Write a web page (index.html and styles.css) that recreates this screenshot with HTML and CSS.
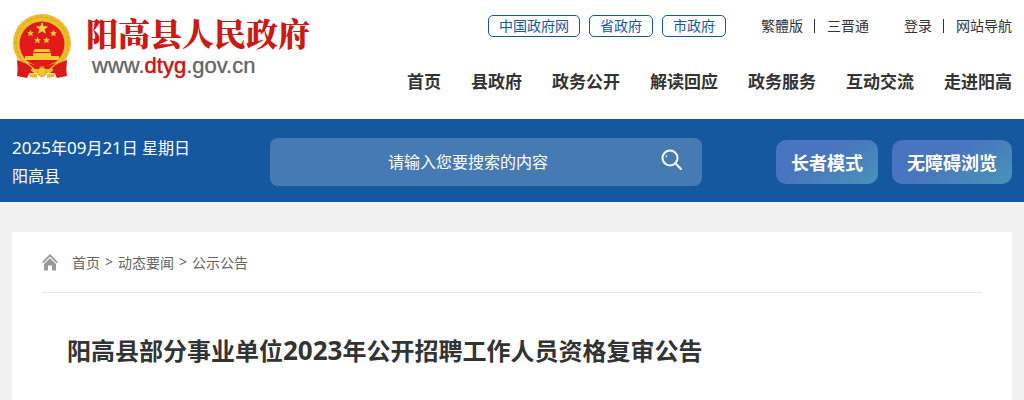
FILE: index.html
```html
<!DOCTYPE html>
<html lang="zh-CN">
<head>
    <meta charset="UTF-8">
    <meta name="viewport" content="width=device-width, initial-scale=1.0">
    <title>阳高县部分事业单位2023年公开招聘工作人员资格复审公告</title>
    <link rel="stylesheet" href="styles.css">
</head>
<body>
    <header class="header">
        <a class="logo" href="#">
            <svg class="emblem" viewBox="0 0 60 66" aria-hidden="true">
                <path d="M7 48 L5 62 L15 64 L17 59 L43 59 L45 64 L55 62 L53 48Z" fill="#d7191c"/>
                <circle cx="30" cy="29" r="29" fill="#edbd2c"/>
                <circle cx="30" cy="29" r="26" fill="none" stroke="#d9a01e" stroke-width="1" stroke-dasharray="3 2"/>
                <circle cx="30" cy="30" r="22.5" fill="#e31a1c"/>
                <path d="M30 9l1.3 3.8h4l-3.2 2.4 1.2 3.9-3.3-2.4-3.3 2.4 1.2-3.9-3.2-2.4h4z" fill="#f8d73c" stroke="#f8d73c"/>
                <path id="star" d="M18.500 16.500l.8 2h2l-1.600 1.300.6 2-1.800-1.200-1.800 1.200.6-2-1.600-1.300h2z" fill="#f8d73c" stroke="#f8d73c" stroke-width=".6"/>
                <use href="#star" x="23"/>
                <use href="#star" x="7" y="7"/>
                <use href="#star" x="16" y="7"/>
                <path d="M23 35h14l2 3H21zM21 39h18v3h8v4H13v-4h8z" fill="#f5c932"/>
                <path d="M9 47q11 1 17 6h8q6-5 17-6l2 4q-9 2-15 8H22q-6-6-15-8z" fill="#f1c230"/>
                <path d="M5 46q10 3 15 8l-5 9-9-2zM55 46q-10 3-15 8l5 9 9-2z" fill="#da1a1c"/>
                <path d="M16 49l14 4 14-4-7 6H23z" fill="#da1a1c"/>
                <circle cx="30" cy="58" r="4.500" fill="#f2c52f" stroke="#d99d1c"/>
                <path d="M17 59l8 1v4l-7-1zM43 59l-8 1v4l7-1z" fill="#edbd2c"/>
            </svg>
            <span class="logo-text">
                <span class="logo-name">阳高县人民政府</span>
                <span class="logo-url">www.<b>dtyg</b>.gov.cn</span>
            </span>
        </a>
        <div class="header-right">
            <div class="top-links">
                <div class="gov-links">
                    <a href="#">中国政府网</a>
                    <a href="#">省政府</a>
                    <a href="#">市政府</a>
                </div>
                <div class="user-links">
                    <a href="#">繁體版</a><i></i><a href="#">三晋通</a>
                </div>
                <div class="user-links">
                    <a href="#">登录</a><i></i><a href="#">网站导航</a>
                </div>
            </div>
            <nav class="nav">
                <a href="#">首页</a>
                <a href="#">县政府</a>
                <a href="#">政务公开</a>
                <a href="#">解读回应</a>
                <a href="#">政务服务</a>
                <a href="#">互动交流</a>
                <a href="#">走进阳高</a>
            </nav>
        </div>
    </header>

    <div class="banner">
        <div class="date">
            <p><span class="num">2025</span>年<span class="num">09</span>月<span class="num">21</span>日 星期日</p>
            <p>阳高县</p>
        </div>
        <form class="search">
            <input type="text" placeholder="请输入您要搜索的内容" aria-label="请输入您要搜索的内容">
            <button type="button" aria-label="搜索">
                <svg width="22" height="22" viewBox="0 0 22 22" fill="none" stroke="#fff" stroke-width="2">
                    <circle cx="9" cy="9" r="7.500"/>
                    <path d="M14.500 14.500L20.500 20.500"/>
                    <path d="M5 8.500q0-1.500 1-2.500" stroke-width="1"/>
                </svg>
            </button>
        </form>
        <div class="modes">
            <button type="button">长者模式</button>
            <button type="button">无障碍浏览</button>
        </div>
    </div>

    <main class="content">
        <div class="breadcrumb">
            <svg width="16" height="17" viewBox="0 0 16 17" aria-hidden="true">
                <path d="M0.700 8.700L8 1.300L15.300 8.700" fill="none" stroke="#999" stroke-width="1.800"/>
                <path d="M8 4.200L14 10V16.500H10V11.500H6V16.500H2V10Z" fill="#999"/>
            </svg>
            <div class="crumbs">
                <a href="#">首页</a><span>&gt;</span><a href="#">动态要闻</a><span>&gt;</span><a href="#">公示公告</a>
            </div>
        </div>
        <h1>阳高县部分事业单位<span class="num">2023</span>年公开招聘工作人员资格复审公告</h1>
    </main>
</body>
</html>
```
FILE: styles.css
```css
* {
    box-sizing: border-box;
    margin: 0;
    padding: 0;
}

body {
    display: flex;
    flex-direction: column;
    min-height: 100vh;
    font-family: "Noto Sans", "Noto Sans CJK SC", sans-serif;
    font-size: 14px;
    color: #333;
    background-color: #f1f1f1;
}

a {
    color: inherit;
    text-decoration: none;
}

button, input {
    font-family: inherit;
    border: none;
    color: #fff;
}

.header {
    display: flex;
    justify-content: space-between;
    padding: 14px 12px 25px;
    background-color: #fff;
}

.logo {
    display: flex;
    gap: 14px;
}

.emblem {
    width: 60px;
    height: 66px;
}

.logo-text {
    display: flex;
    flex-direction: column;
}

.logo-name {
    font-family: "Noto Serif CJK SC", "Noto Sans CJK SC", serif;
    font-size: 32px;
    font-weight: 900;
    line-height: 36px;
    color: #cb1a14;
}

.logo-url {
    padding-left: 6px;
    font-family: "Liberation Sans", Arial, sans-serif;
    font-size: 22px;
    line-height: 32px;
    color: #666;
    text-shadow: 0 0 1px #999;
}

.logo-url b {
    font-weight: normal;
    color: #cb1a14;
    text-shadow: 0 0 1px #cb1a14;
}

.header-right {
    display: flex;
    flex-direction: column;
    align-items: flex-end;
    gap: 32px;
}

.top-links {
    display: flex;
    align-items: center;
    gap: 35px;
    line-height: 24px;
}

.gov-links {
    display: flex;
    gap: 9px;
}

.gov-links a {
    padding: 0 10px;
    border: 1px solid #16589f;
    border-radius: 5px;
    line-height: 20px;
    color: #16589f;
}

.user-links {
    display: flex;
    align-items: center;
}

.user-links i {
    width: 1px;
    height: 14px;
    margin: 0 12px 0 11px;
    background-color: #333;
}

.nav {
    display: flex;
    gap: 30px;
    font-size: 17px;
    font-weight: bold;
    line-height: 24px;
}

.banner {
    display: flex;
    align-items: center;
    padding: 15px 12px 12px;
    background-color: #16589f;
    color: #fff;
}

.date {
    width: 258px;
    font-size: 16px;
    line-height: 28px;
}

.date .num {
    font-size: 17px;
    line-height: 1;
}

.search {
    display: flex;
    flex: 1;
    height: 48px;
    border-radius: 8px;
    background-color: #467ab3;
}

.search input {
    flex: 1;
    min-width: 0;
    padding-left: 24px;
    background: none;
    font-size: 16px;
    text-align: center;
}

.search input::placeholder {
    color: #fff;
}

.search button {
    width: 60px;
    background: none;
}

.modes {
    display: flex;
    gap: 14px;
    margin-left: 74px;
}

.modes button {
    height: 44px;
    padding: 0 15px;
    border-radius: 10px;
    background: linear-gradient(150deg, #4874c0 40%, #488fb9 90%);
    font-size: 18px;
    font-weight: bold;
}

.content {
    flex: 1;
    margin: 30px 12px 0;
    padding: 0 30px;
    background-color: #fff;
}

.breadcrumb {
    display: flex;
    align-items: center;
    gap: 14px;
    height: 61px;
    border-bottom: 1px solid #e6e6e6;
    color: #666;
}

.crumbs {
    display: flex;
    gap: 5px;
}

.content h1 {
    padding: 40px 25px 20px;
    font-size: 24px;
    line-height: 36px;
}

.content h1 .num {
    font-size: 26px;
    line-height: 1;
}
```
